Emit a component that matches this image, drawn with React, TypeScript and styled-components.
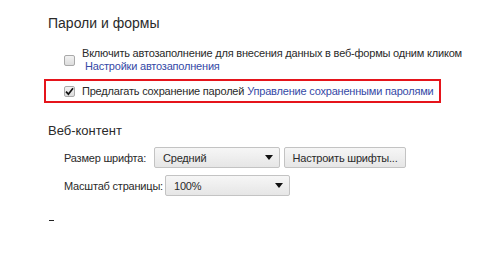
import React from "react";
import styled, { createGlobalStyle } from "styled-components";

const GlobalStyle = createGlobalStyle`
  html, body {
    margin: 0;
    padding: 0;
    background: #fff;
  }
  body {
    font-family: "Liberation Sans", Arial, sans-serif;
    font-size: 11px;
    letter-spacing: -0.2px;
    color: #2a2a2a;
    white-space: nowrap;
  }
`;

const Page = styled.div`
  width: 500px;
  height: 270px;
  box-sizing: border-box;
  padding: 14px 0 0 48px;
  display: flex;
  flex-direction: column;
`;

const SectionTitle = styled.h3<{ size?: number }>`
  margin: 0;
  font-size: ${(p) => p.size ?? 13}px;
  font-weight: 400;
  letter-spacing: 0;
  line-height: 18px;
  color: #2a2a2a;
`;

const SectionBody = styled.div<{ gap?: number }>`
  display: flex;
  flex-direction: column;
  gap: ${(p) => p.gap ?? 0}px;
  padding-left: 16px;
`;

const CheckRow = styled.label`
  display: flex;
  align-items: center;
  gap: 7px;
  line-height: 13px;
`;

const Box = styled.span`
  flex: none;
  width: 9px;
  height: 9px;
  border: 1px solid #a9a9a9;
  border-radius: 2px;
  background: linear-gradient(#f2f2f2, #dcdcdc);
  display: flex;
  align-items: center;
  justify-content: center;
`;

const LabelStack = styled.div`
  display: flex;
  flex-direction: column;
`;

const Link = styled.a`
  color: #3549a6;
  text-decoration: none;
  cursor: pointer;
`;

const Indented = styled.span`
  padding-left: 3px;
`;

const Highlight = styled.div`
  align-self: flex-start;
  margin: 6px 0 0 -20px;
  padding: 3px 5px 3px 18px;
  border: 2px solid #e5141b;
  height: 14px;
  display: flex;
  align-items: center;
`;

const InlineGap = styled.span`
  display: inline-block;
  width: 3px;
`;

const FieldRow = styled.div`
  display: flex;
  align-items: center;
  gap: 4px;
`;

const FieldLabel = styled.span<{ w: number }>`
  width: ${(p) => p.w}px;
  flex: none;
`;

const Select = styled.div<{ w: number }>`
  width: ${(p) => p.w}px;
  height: 21px;
  box-sizing: border-box;
  border: 1px solid #c3c3c3;
  border-radius: 2px;
  background: linear-gradient(#f6f6f6, #e6e6e6);
  display: flex;
  align-items: center;
  justify-content: space-between;
  padding: 0 6px 0 8px;
`;

const Arrow = styled.span`
  width: 0;
  height: 0;
  border-left: 4px solid transparent;
  border-right: 4px solid transparent;
  border-top: 5px solid #111;
`;

const Button = styled.button`
  width: 122px;
  height: 21px;
  box-sizing: border-box;
  border: 1px solid #c3c3c3;
  border-radius: 2px;
  background: linear-gradient(#f6f6f6, #e6e6e6);
  font: inherit;
  letter-spacing: inherit;
  color: inherit;
  padding: 0;
`;

const Dash = styled.div`
  margin: 24px 0 0 1px;
  width: 5px;
  height: 1px;
  background: #222;
`;

const Check = () => (
  <svg width="9" height="9" viewBox="0 0 9 9">
    <path d="M1 4.6 L3.4 7.2 L8 1.2" fill="none" stroke="#111" strokeWidth="1.7" />
  </svg>
);

export default function App() {
  return (
    <>
      <GlobalStyle />
      <Page>
        <SectionTitle size={14}>Пароли и формы</SectionTitle>
        <SectionBody style={{ marginTop: 15 }}>
          <CheckRow>
            <Box />
            <LabelStack>
              <span>Включить автозаполнение для внесения данных в веб-формы одним кликом</span>
              <Indented>
                <Link>Настройки автозаполнения</Link>
              </Indented>
            </LabelStack>
          </CheckRow>
          <Highlight>
            <CheckRow>
              <Box>
                <Check />
              </Box>
              <span>
                Предлагать сохранение паролей
                <InlineGap />
                <Link>Управление сохраненными паролями</Link>
              </span>
            </CheckRow>
          </Highlight>
        </SectionBody>

        <SectionTitle style={{ marginTop: 19 }}>Веб-контент</SectionTitle>
        <SectionBody gap={7} style={{ marginTop: 7 }}>
          <FieldRow>
            <FieldLabel w={86}>Размер шрифта:</FieldLabel>
            <Select w={126}>
              Средний
              <Arrow />
            </Select>
            <Button>Настроить шрифты...</Button>
          </FieldRow>
          <FieldRow>
            <FieldLabel w={97}>Масштаб страницы:</FieldLabel>
            <Select w={125}>
              100%
              <Arrow />
            </Select>
          </FieldRow>
        </SectionBody>
        <Dash />
      </Page>
    </>
  );
}
